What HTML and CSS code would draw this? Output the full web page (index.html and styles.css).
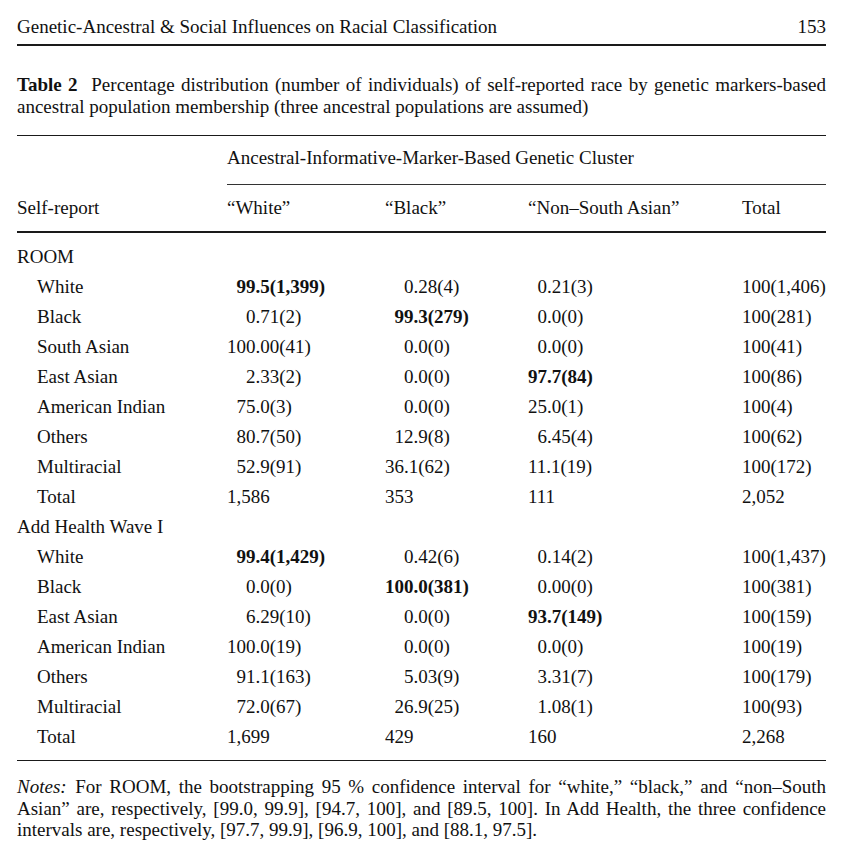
FILE: index.html
```html
<!DOCTYPE html>
<html>
<head>
<meta charset="utf-8">
<link rel="stylesheet" href="styles.css">
</head>
<body>
<div class="page">
  <header class="running">
    <span>Genetic-Ancestral &amp; Social Influences on Racial Classification</span>
    <span>153</span>
  </header>
  <p class="caption"><b>Table 2</b>&nbsp; Percentage distribution (number of individuals) of self-reported race by genetic markers-based ancestral population membership (three ancestral populations are assumed)</p>
  <table class="data">
    <colgroup>
      <col class="c-label"><col class="c-w"><col class="c-b"><col class="c-n"><col class="c-t">
    </colgroup>
    <thead>
      <tr class="spanner">
        <th></th>
        <th colspan="4" class="rule">Ancestral-Informative-Marker-Based Genetic Cluster</th>
      </tr>
      <tr class="heads">
        <th>Self-report</th>
        <th>“White”</th>
        <th>“Black”</th>
        <th>“Non–South Asian”</th>
        <th>Total</th>
      </tr>
    </thead>
    <tbody>
      <tr class="group first"><td colspan="5">ROOM</td></tr>
      <tr><td class="lab">White</td><td><span class="i1"><b>99.5(1,399)</b></span></td><td><span class="i2">0.28(4)</span></td><td><span class="i1">0.21(3)</span></td><td>100(1,406)</td></tr>
      <tr><td class="lab">Black</td><td><span class="i2">0.71(2)</span></td><td><span class="i1"><b>99.3(279)</b></span></td><td><span class="i1">0.0(0)</span></td><td>100(281)</td></tr>
      <tr><td class="lab">South Asian</td><td>100.00(41)</td><td><span class="i2">0.0(0)</span></td><td><span class="i1">0.0(0)</span></td><td>100(41)</td></tr>
      <tr><td class="lab">East Asian</td><td><span class="i2">2.33(2)</span></td><td><span class="i2">0.0(0)</span></td><td><b>97.7(84)</b></td><td>100(86)</td></tr>
      <tr><td class="lab">American Indian</td><td><span class="i1">75.0(3)</span></td><td><span class="i2">0.0(0)</span></td><td>25.0(1)</td><td>100(4)</td></tr>
      <tr><td class="lab">Others</td><td><span class="i1">80.7(50)</span></td><td><span class="i1">12.9(8)</span></td><td><span class="i1">6.45(4)</span></td><td>100(62)</td></tr>
      <tr><td class="lab">Multiracial</td><td><span class="i1">52.9(91)</span></td><td>36.1(62)</td><td>11.1(19)</td><td>100(172)</td></tr>
      <tr><td class="lab">Total</td><td>1,586</td><td>353</td><td>111</td><td>2,052</td></tr>
      <tr class="group"><td colspan="5">Add Health Wave I</td></tr>
      <tr><td class="lab">White</td><td><span class="i1"><b>99.4(1,429)</b></span></td><td><span class="i2">0.42(6)</span></td><td><span class="i1">0.14(2)</span></td><td>100(1,437)</td></tr>
      <tr><td class="lab">Black</td><td><span class="i2">0.0(0)</span></td><td><b>100.0(381)</b></td><td><span class="i1">0.00(0)</span></td><td>100(381)</td></tr>
      <tr><td class="lab">East Asian</td><td><span class="i2">6.29(10)</span></td><td><span class="i2">0.0(0)</span></td><td><b>93.7(149)</b></td><td>100(159)</td></tr>
      <tr><td class="lab">American Indian</td><td>100.0(19)</td><td><span class="i2">0.0(0)</span></td><td><span class="i1">0.0(0)</span></td><td>100(19)</td></tr>
      <tr><td class="lab">Others</td><td><span class="i1">91.1(163)</span></td><td><span class="i2">5.03(9)</span></td><td><span class="i1">3.31(7)</span></td><td>100(179)</td></tr>
      <tr><td class="lab">Multiracial</td><td><span class="i1">72.0(67)</span></td><td><span class="i1">26.9(25)</span></td><td><span class="i1">1.08(1)</span></td><td>100(93)</td></tr>
      <tr class="last"><td class="lab">Total</td><td>1,699</td><td>429</td><td>160</td><td>2,268</td></tr>
    </tbody>
  </table>
  <p class="notes"><i>Notes:</i> For ROOM, the bootstrapping 95 % confidence interval for “white,” “black,” and “non–South Asian” are, respectively, [99.0, 99.9], [94.7, 100], and [89.5, 100]. In Add Health, the three confidence intervals are, respectively, [97.7, 99.9], [96.9, 100], and [88.1, 97.5].</p>
</div>
</body>
</html>
```
FILE: styles.css
```css
html, body {
  margin: 0;
  padding: 0;
  background: #ffffff;
}
body {
  font-family: "Liberation Serif", "Times New Roman", serif;
  font-size: 19px;
  color: #111111;
}
.page {
  width: 809px;
  margin-left: 17px;
  padding-top: 16px;
}
.running {
  display: flex;
  justify-content: space-between;
  line-height: 22px;
  padding-bottom: 6px;
  border-bottom: 2px solid #1a1a1a;
}
.caption {
  margin: 28px 0 0 0;
  line-height: 22px;
  text-align: justify;
}
.caption b {
  font-weight: bold;
  margin-right: 1px;
}
.data {
  width: 809px;
  margin-top: 17px;
  border-collapse: collapse;
  border-top: 1px solid #1a1a1a;
  border-bottom: 1px solid #1a1a1a;
  table-layout: fixed;
  line-height: 22px;
}
.c-label { width: 210px; }
.c-w { width: 158px; }
.c-b { width: 143px; }
.c-n { width: 214px; }
.c-t { width: 84px; }
.data th, .data td {
  padding: 0;
  text-align: left;
  font-weight: normal;
  white-space: nowrap;
}
.spanner th {
  padding-top: 11px;
  padding-bottom: 15px;
}
.spanner th.rule {
  border-bottom: 1px solid #333333;
}
.heads th {
  padding-top: 12px;
  padding-bottom: 12px;
  border-bottom: 2px solid #1a1a1a;
}
.data td {
  padding-top: 4px;
  padding-bottom: 4px;
}
.data tr.first td {
  padding-top: 13px;
}
.data tr.last td {
  padding-bottom: 12px;
}
.data td.lab {
  padding-left: 20px;
}
.i1 { padding-left: 0.5em; }
.i2 { padding-left: 1em; }
.notes {
  margin: 15px 0 0 0;
  line-height: 21.5px;
  text-align: justify;
}
.notes i {
  margin-right: 1px;
}
```
